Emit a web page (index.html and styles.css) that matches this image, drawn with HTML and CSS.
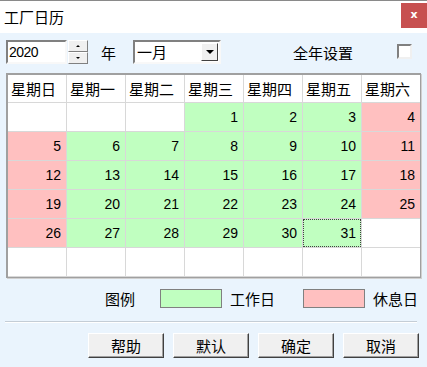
FILE: index.html
```html
<!DOCTYPE HTML>
<html>
<head>
<meta http-equiv="Content-Type" content="text/html; charset=utf-8">
<title>工厂日历</title>
<link rel="stylesheet" href="styles.css">
</head>
<body>
<div class="window">
	<div class="titleBar">
		<span class="titleText">工厂日历</span>
		<span class="closeBtn">x</span>
	</div>
	<div class="content">
		<div class="controls">
			<div class="yearBox">2020</div>
			<div class="spin">
				<span class="spinBtn"><i class="triUp"></i></span>
				<span class="spinBtn"><i class="triDown"></i></span>
			</div>
			<span class="yearLbl">年</span>
			<div class="monthSel">
				<span class="monthVal">一月</span>
				<span class="dropBtn"><i class="triDown big"></i></span>
			</div>
			<span class="allYear">全年设置</span>
			<span class="checkBox"></span>
		</div>

		<div class="calFrame">
			<div class="cal">
				<div class="hd">星期日</div><div class="hd">星期一</div><div class="hd">星期二</div><div class="hd">星期三</div><div class="hd">星期四</div><div class="hd">星期五</div><div class="hd">星期六</div>

				<div class="day"></div><div class="day"></div><div class="day"></div><div class="day work">1</div><div class="day work">2</div><div class="day work">3</div><div class="day rest">4</div>
				<div class="day rest">5</div><div class="day work">6</div><div class="day work">7</div><div class="day work">8</div><div class="day work">9</div><div class="day work">10</div><div class="day rest">11</div>
				<div class="day rest">12</div><div class="day work">13</div><div class="day work">14</div><div class="day work">15</div><div class="day work">16</div><div class="day work">17</div><div class="day rest">18</div>
				<div class="day rest">19</div><div class="day work">20</div><div class="day work">21</div><div class="day work">22</div><div class="day work">23</div><div class="day work">24</div><div class="day rest">25</div>
				<div class="day rest">26</div><div class="day work">27</div><div class="day work">28</div><div class="day work">29</div><div class="day work">30</div><div class="day work current">31</div><div class="day"></div>
				<div class="day"></div><div class="day"></div><div class="day"></div><div class="day"></div><div class="day"></div><div class="day"></div><div class="day"></div>
			</div>
		</div>

		<div class="legend">
			<span class="legendLbl">图例</span>
			<span class="swatch work"></span>
			<span class="legendTxt">工作日</span>
			<span class="swatch rest"></span>
			<span class="legendTxt">休息日</span>
		</div>

		<div class="sep"></div>

		<div class="buttons">
			<button class="btn">帮助</button>
			<button class="btn">默认</button>
			<button class="btn">确定</button>
			<button class="btn">取消</button>
		</div>
	</div>
</div>
</body>
</html>
```

FILE: styles.css
```css
@charset "utf-8";

body{
	margin:0;
	font-family:"Noto Sans CJK SC","Liberation Sans",sans-serif;
	font-size:15px;
	color:#000;
	background-color:#eaf4fd;
}

.window{
	width:427px;
	height:367px;
	overflow:hidden;
	background-color:#eaf4fd;
}

.titleBar{
	height:32px;
	background-color:#fff;
	border-top:1px solid #8a8a8a;
	display:flex;
	align-items:center;
	justify-content:space-between;
}

.titleText{
	padding-left:4px;
	line-height:16px;
}

.closeBtn{
	width:26px;
	height:25px;
	margin-top:-4px;
	background-color:#c75050;
	color:#fff;
	font-family:"DejaVu Sans",sans-serif;
	font-weight:bold;
	font-size:11px;
	line-height:24px;
	text-align:center;
}

.content{
	padding:7px 6px 0 6px;
}

/* top controls */
.controls{
	height:24px;
	display:flex;
	align-items:center;
}

.yearBox{
	width:56px;
	height:20px;
	border:2px solid;
	border-color:#808080 #f8f8f8 #f8f8f8 #808080;
	background-color:#fff;
	font-family:"Liberation Sans",sans-serif;
	font-size:14px;
	line-height:20px;
	padding-left:1px;
	letter-spacing:-0.5px;
}

.spin{
	width:20px;
	height:24px;
	margin-left:1px;
	display:flex;
	flex-direction:column;
}

.spinBtn{
	flex:1;
	background-color:#f0f0f0;
	border:1px solid;
	border-color:#fff #808080 #808080 #fff;
	display:flex;
	align-items:center;
	justify-content:center;
}

.triUp, .triDown{
	display:block;
	width:0;
	height:0;
	border-left:2px solid transparent;
	border-right:2px solid transparent;
}

.triUp{
	border-bottom:2px solid #000;
}

.triDown{
	border-top:2px solid #000;
}

.triDown.big{
	border-left-width:4px;
	border-right-width:4px;
	border-top-width:4px;
}

.yearLbl{
	margin-left:13px;
	width:32px;
}

.monthSel{
	width:84px;
	height:20px;
	border:2px solid;
	border-color:#808080 #f8f8f8 #f8f8f8 #808080;
	background-color:#fff;
	display:flex;
	align-items:center;
	justify-content:space-between;
}

.monthVal{
	padding-left:2px;
	line-height:20px;
}

.dropBtn{
	width:17px;
	height:18px;
	background-color:#f0f0f0;
	border:1px solid;
	border-color:#fff #404040 #404040 #fff;
	display:flex;
	align-items:center;
	justify-content:center;
	box-sizing:border-box;
	margin-right:1px;
}

.allYear{
	margin-left:72px;
}

.checkBox{
	width:11px;
	height:11px;
	margin-left:44px;
	margin-top:-1px;
	background-color:#fff;
	border:2px solid;
	border-color:#808080 #f0f0f0 #f0f0f0 #808080;
}

/* calendar */
.calFrame{
	margin-top:9px;
	width:412px;
	border:2px solid;
	border-color:#a0a0a0 #d8d8d8 #d8d8d8 #a0a0a0;
	border-right:1px solid #a0a0a0;
	border-bottom:1px solid #a0a0a0;
	box-shadow:1px 1px 0 #d0d0d0;
}

.cal{
	display:grid;
	grid-template-columns:repeat(7, 1fr);
	grid-template-rows:27px repeat(6, 28px);
	gap:1px;
	background-color:#d8d8d8;
	border-bottom:1px solid #d8d8d8;
}

.hd{
	background-color:#fff;
	padding-left:3px;
	line-height:27px;
}

.day{
	background-color:#fff;
	text-align:right;
	padding-right:5px;
	font-family:"Liberation Sans",sans-serif;
	font-size:14px;
	line-height:28px;
}

.day.work{
	background-color:#c0ffc0;
}

.day.rest{
	background-color:#ffc0c0;
}

.day.current{
	outline:1px dotted #404040;
	outline-offset:-1px;
}

/* legend */
.legend{
	margin-top:11px;
	height:19px;
	display:flex;
	align-items:center;
	padding-left:99px;
}

.swatch{
	width:60px;
	height:17px;
	border:1px solid #808080;
}

.swatch.work{
	background-color:#c0ffc0;
	margin-left:25px;
}

.swatch.rest{
	background-color:#ffc0c0;
	margin-left:28px;
}

.legendTxt{
	margin-left:8px;
}

.sep{
	margin-top:13px;
	margin-left:-1px;
	width:412px;
	height:1px;
	background-color:#c4cdd6;
	border-bottom:1px solid #fff;
}

/* buttons */
.buttons{
	margin-top:10px;
	display:flex;
	justify-content:flex-end;
	gap:9px;
	padding-right:2px;
}

.btn{
	width:76px;
	height:25px;
	padding:0;
	font-family:"Noto Sans CJK SC",sans-serif;
	font-size:15px;
	background-color:#f0f0f0;
	border:1px solid;
	border-color:#fff #404040 #404040 #fff;
	box-shadow:inset -1px -1px 0 #a0a0a0;
}
```
